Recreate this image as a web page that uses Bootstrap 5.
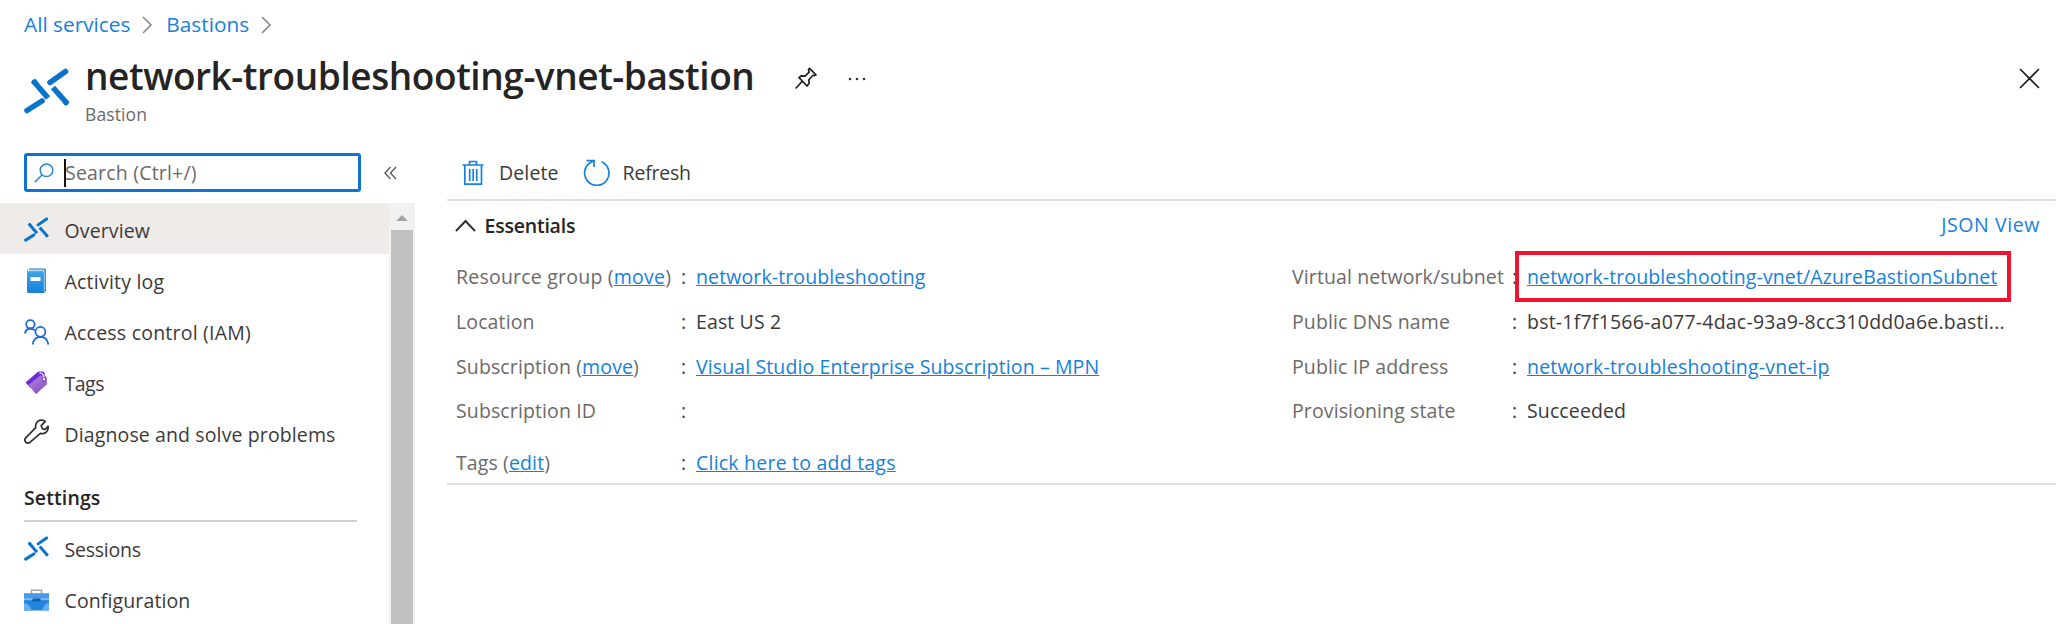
<!DOCTYPE html>
<html lang="en">
<head>
<meta charset="utf-8">
<meta name="viewport" content="width=device-width, initial-scale=1">
<title>network-troubleshooting-vnet-bastion</title>
<link href="https://cdn.jsdelivr.net/npm/bootstrap@5.3.0/dist/css/bootstrap.min.css" rel="stylesheet">
<style>
body{font-family:"Open Sans","Noto Sans",sans-serif;font-size:19.5px;line-height:26px;letter-spacing:.12px;color:#3b3a39;background:#fff;height:624px;overflow:hidden}
a{color:#1581dc}
svg{display:block;flex:none}
.loose{letter-spacing:.22px}
.tight{letter-spacing:-.22px}
.tighter{letter-spacing:-.5px}
.crumbs{height:47px;padding-left:24px;font-size:20.8px;letter-spacing:0}
.blade-head{height:106px;padding-left:24px}
.blade-logo{margin:21px 15px 0 0}
.blade-title{font-size:37px;line-height:46px;font-weight:600;letter-spacing:-.43px;color:#252423;margin:6px 0 0}
.blade-sub{font-size:17.5px;line-height:24px;color:#6c6a68;margin-top:3px;letter-spacing:.1px}
.pin{margin:20px 0 0 41px}
.dots{margin:30px 0 0 28px}
.close-x{margin:21px 29px 0 auto}
.side{width:415px}
.search-box{width:337px;height:39px;margin-left:24px;border:3px solid #0f74d1;border-radius:3px;padding-left:7px}
.search-box input{border:0;outline:0;padding:0 0 0 1px;margin-left:-2px;width:250px;font:inherit;letter-spacing:.2px;background:none}
.search-box input::placeholder{color:#6c6a68;opacity:1}
.caret-bar{width:2px;height:28px;background:#111;margin-left:10px}
.fold{margin-left:23px}
.side-menu{height:421px;margin-top:11px}
.side-item{height:51px;padding:4px 0 0 24px;color:#3b3a39;text-decoration:none}
.side-item.current{background:#efebe9}
.side-item svg{margin:-2px 15.500px 0 0}
.side-head{height:64px;margin:0 32px 0 24px;padding-top:27px;border-bottom:2px solid #d2d0ce;font-weight:600;color:#252423}
.scroll-rail{width:26px;background:#f1f1f1;padding:12px 2px 0}
.scroll-thumb{background:#c1c1c1;margin-top:9px}
.pane{margin-left:32px;width:1609px}
.toolbar{height:48px;border-bottom:2px solid #e1dfdd;padding:0 0 6px 14px}
.toolbar .cmd{margin-left:14px}
.toolbar .reload{margin-left:22px}
.ess{height:284px;border-bottom:2px solid #e1dfdd}
.ess-head{height:54px;padding:0 16px 5px 8px}
.ess-title{font-weight:600;color:#252423;margin-left:8.500px}
.json-link{letter-spacing:.6px;margin-top:-2px}
.col-a{width:837px;padding-left:9px}
.ess-row{height:44.7px;color:#6c6a68;white-space:nowrap}
.tags-row{margin-top:7px}
.colon{width:15px;color:#3b3a39}
.lab-a{width:225px}
.lab-b{width:220px}
.val{color:#3b3a39}
.marked::after{content:"";position:absolute;left:-12px;top:-13px;width:496px;height:51px;border:4px solid #f0142f}
</style>
</head>
<body>
<svg class="d-none"><defs>
<symbol id="bastion" viewBox="0 0 46 46"><g fill="none" stroke="#0a74cc" stroke-width="5.600"><path stroke-linecap="round" d="M3 42.500L18 33"/><path stroke-linecap="round" d="M41.500 3.500L26 14.500"/><path d="M9 12.500L24 30"/><path d="M29 19.500L43.500 36"/></g><circle cx="10.500" cy="14" r="2.800" fill="#0a74cc"/><circle cx="42" cy="34.500" r="2.800" fill="#0a74cc"/></symbol>
</defs></svg>

<nav class="crumbs d-flex align-items-center">
  <a class="text-decoration-none" href="#">All services</a>
  <svg class="ms-2 me-2" width="20" height="20" fill="none" stroke="#8a8886" stroke-width="1.600"><path d="M5 3l8 8-8 8"/></svg>
  <a class="text-decoration-none" href="#">Bastions</a>
  <svg class="ms-2" width="20" height="20" fill="none" stroke="#8a8886" stroke-width="1.600"><path d="M5 3l8 8-8 8"/></svg>
</nav>

<header class="blade-head d-flex align-items-start">
  <svg class="blade-logo" width="46" height="46"><use href="#bastion"/></svg>
  <div>
    <h1 class="blade-title">network-troubleshooting-vnet-bastion</h1>
    <div class="blade-sub">Bastion</div>
  </div>
  <svg class="pin" width="24" height="23" fill="none" stroke="#222" stroke-width="1.700" stroke-linejoin="round"><path d="M14.500 1.300l6.500 6.500-1.800 1-1.200-.5-4.300 4.700.5 3.300-2.200 2.700-8-8.300 2-1.800 4 .3 4.200-4-.7-2.200zM7 14.500L.7 21.500"/></svg>
  <svg class="dots" width="20" height="6" fill="#333"><circle cx="3" cy="2" r="1.300"/><circle cx="10" cy="2" r="1.300"/><circle cx="17" cy="2" r="1.300"/></svg>
  <svg class="close-x" width="21" height="21" fill="none" stroke="#1b1a19" stroke-width="1.600"><path d="M1 1l19 19M20 1L1 20"/></svg>
</header>

<div class="d-flex align-items-start">
  <aside class="side">
    <div class="d-flex align-items-center">
      <div class="search-box d-flex align-items-center">
        <svg width="20" height="20" fill="none" stroke="#2b88d8" stroke-width="1.500"><circle cx="12.500" cy="7.300" r="6.300"/><path d="M8 12L.7 19.300"/></svg>
        <span class="caret-bar"></span>
        <input type="text" placeholder="Search (Ctrl+/)">
      </div>
      <svg class="fold" width="13" height="14" fill="none" stroke="#605e5c" stroke-width="1.400"><path d="M6.500 1L1 7l5.500 6M12 1L6.500 7l5.500 6"/></svg>
    </div>
    <div class="side-menu d-flex">
      <div class="flex-grow-1">
        <a class="side-item current d-flex align-items-center" href="#"><svg width="25" height="25"><use href="#bastion"/></svg><span>Overview</span></a>
        <a class="side-item d-flex align-items-center" href="#">
          <svg width="25" height="26" viewBox="0 0 25 26"><defs><linearGradient id="book" x2="0" y2="1"><stop stop-color="#42a9ec"/><stop offset="1" stop-color="#1481d8"/></linearGradient></defs><path d="M5 .5h15.500q1.500 0 1.500 1.500v20.500l-2 2.500H5z" fill="#2a80bd"/><path d="M5 1.500h15v2H5z" fill="#b5dcf5"/><path d="M19.500 3l1.700-1.500V22l-1.700 2z" fill="#8bc7ee"/><path d="M3 2q0-1 1-1v2.500h15.500V25H4.500Q3 25 3 23.500z" fill="url(#book)"/><rect x="6.500" y="9" width="10" height="4" fill="#fff"/></svg>
          <span class="loose">Activity log</span></a>
        <a class="side-item d-flex align-items-center" href="#">
          <svg width="25" height="26" viewBox="0 0 25 26" fill="none" stroke="#1b6ae0" stroke-width="1.800"><circle cx="6.400" cy="5.300" r="4.200"/><circle cx="16.400" cy="12.800" r="5"/><path d="M.9 14.500Q1.800 9.700 6.300 9.500q2.600 0 4.400 1.800M8.700 25.500Q9.900 18 16.500 17.900T24.300 25.500"/></svg>
          <span class="loose">Access control (IAM)</span></a>
        <a class="side-item d-flex align-items-center" href="#">
          <svg width="25" height="26" viewBox="0 0 25 26"><defs><linearGradient id="tag" x2=".6" y2="1"><stop stop-color="#b58ae0"/><stop offset="1" stop-color="#8a50c4"/></linearGradient></defs><path d="M1.500 12.500L14 1.800l5-.3 1.700 1.700V6L6.500 18z" fill="#6f2bd4"/><path d="M4.500 15L16.500 5.500l5 .3 1.300 1.500v7L12 24.300z" fill="url(#tag)"/><circle cx="20" cy="9.200" r="1.800" fill="#fff" stroke="#6b35aa"/><path d="M15.500 4q1-1.500 2.600-.6 1.700 1.200 1.700 4" fill="none" stroke="#e3d5f5" stroke-width="1.200"/></svg>
          <span class="tighter">Tags</span></a>
        <a class="side-item d-flex align-items-center pb-1" href="#">
          <svg width="25" height="25" viewBox="0 0 25 25" fill="none" stroke="#323130" stroke-width="1.700" stroke-linejoin="round"><path d="M21.300 2.400l-4.100 4.300 1.200 3.100 3 .500L24 7.200q.8 4.300-2.400 6.500-2.200 1.500-5.200.700L6.200 23.200q-2.500 1.800-4.500-.1-1.700-2.100 0-4.200l10-10.200q-.7-4.100 2-6.300 3.500-2.600 7.600 0z"/></svg>
          <span class="pt-1">Diagnose and solve problems</span></a>
        <div class="side-head">Settings</div>
        <a class="side-item d-flex align-items-center" href="#"><svg width="25" height="25"><use href="#bastion"/></svg><span class="tight">Sessions</span></a>
        <a class="side-item d-flex align-items-center" href="#">
          <svg width="25" height="22" viewBox="0 0 25 22"><path d="M7.500 5V1.200h10V5" fill="none" stroke="#a3a3a3" stroke-width="1.400"/><rect y="4.500" width="25" height="17" fill="#2484df"/><path d="M0 4.500h25V9H0z" fill="#4a98e8"/><path d="M0 9.200h25v2H0z" fill="#79bdf3"/><path d="M0 14q5 0 8 7.500H0zM25 13.500q-5 1-7 8h7z" fill="#63aef0"/><rect x="8.500" y="9.500" width="8" height="3" fill="#0f5fae"/></svg>
          <span>Configuration</span></a>
      </div>
      <div class="scroll-rail d-flex flex-column">
        <svg class="mx-auto" width="12" height="6" fill="#a3a3a3"><path d="M0 6l6-6 6 6z"/></svg>
        <div class="scroll-thumb flex-grow-1"></div>
      </div>
    </div>
  </aside>

  <main class="pane">
    <div class="toolbar d-flex align-items-center">
      <svg width="24" height="26" fill="none" stroke="#1581dc" stroke-width="1.700"><path d="M1.500 5h21M8.500 5V1.500h7V5M3.800 5v19.200h16.700V5M8.700 9v12M12.200 9v12M15.700 9v12"/></svg>
      <span class="cmd">Delete</span>
      <svg class="reload" width="30" height="28" fill="none" stroke="#1581dc" stroke-width="1.700"><path d="M20.500 2.800A12.200 12.200 0 1 1 10 3.300l2.600-1.500M5.500 1.600h7.500V8"/></svg>
      <span class="tight ms-2 ps-1">Refresh</span>
    </div>
    <section class="ess">
      <div class="ess-head d-flex align-items-center">
        <svg width="21" height="13" fill="none" stroke="#323130" stroke-width="2"><path d="M1 12l9.500-10L20 12"/></svg>
        <span class="ess-title tight">Essentials</span>
        <a class="json-link ms-auto text-decoration-none" href="#">JSON View</a>
      </div>
      <div class="d-flex">
        <div class="col-a">
          <div class="ess-row d-flex align-items-center"><span class="lab-a loose">Resource group (<a href="#">move</a>)</span><span class="colon">:</span><a href="#">network-troubleshooting</a></div>
          <div class="ess-row d-flex align-items-center"><span class="lab-a">Location</span><span class="colon">:</span><span class="val">East US 2</span></div>
          <div class="ess-row d-flex align-items-center"><span class="lab-a">Subscription (<a href="#">move</a>)</span><span class="colon">:</span><a href="#">Visual Studio Enterprise Subscription – MPN</a></div>
          <div class="ess-row d-flex align-items-center"><span class="lab-a">Subscription ID</span><span class="colon">:</span></div>
          <div class="ess-row tags-row d-flex align-items-center"><span class="lab-a">Tags (<a href="#">edit</a>)</span><span class="colon">:</span><a class="loose" href="#">Click here to add tags</a></div>
        </div>
        <div class="ps-2">
          <div class="ess-row d-flex align-items-center"><span class="lab-b">Virtual network/subnet</span><span class="colon">:</span><span class="marked position-relative"><a href="#">network-troubleshooting-vnet/AzureBastionSubnet</a></span></div>
          <div class="ess-row d-flex align-items-center"><span class="lab-b">Public DNS name</span><span class="colon">:</span><span class="val loose">bst-1f7f1566-a077-4dac-93a9-8cc310dd0a6e.basti...</span></div>
          <div class="ess-row d-flex align-items-center"><span class="lab-b">Public IP address</span><span class="colon">:</span><a class="loose" href="#">network-troubleshooting-vnet-ip</a></div>
          <div class="ess-row d-flex align-items-center"><span class="lab-b">Provisioning state</span><span class="colon">:</span><span class="val">Succeeded</span></div>
        </div>
      </div>
    </section>
  </main>
</div>
<script src="https://cdn.jsdelivr.net/npm/bootstrap@5.3.0/dist/js/bootstrap.bundle.min.js"></script>
</body>
</html>
